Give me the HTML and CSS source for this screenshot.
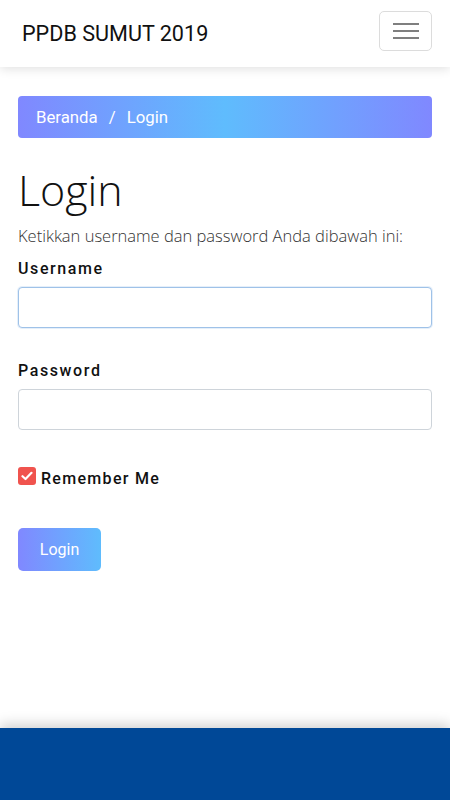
FILE: index.html
```html
<!DOCTYPE html>
<html lang="id">
<head>
<meta charset="utf-8">
<title>Login - PPDB SUMUT 2019</title>
<link rel="stylesheet" href="styles.css">
</head>
<body>
<header class="navbar">
  <span class="brand">PPDB SUMUT 2019</span>
  <button class="toggler" type="button" aria-label="Menu">
    <span class="bar"></span><span class="bar"></span><span class="bar"></span>
  </button>
</header>
<main class="content">
  <nav class="breadcrumb">
    <span>Beranda</span><span class="sep">/</span><span>Login</span>
  </nav>
  <h1 class="title">Login</h1>
  <p class="lead">Ketikkan username dan password Anda dibawah ini:</p>
  <form class="form">
    <div class="group">
      <label class="label">Username</label>
      <input class="input focus" type="text">
    </div>
    <div class="group">
      <label class="label">Password</label>
      <input class="input" type="password">
    </div>
    <div class="check">
      <span class="box"><svg width="12" height="10" viewBox="0 0 12 10"><path d="M1.5 5.2 L4.5 8 L10.5 1.8" fill="none" stroke="#fff" stroke-width="2.2" stroke-linecap="round" stroke-linejoin="round"/></svg></span>
      <span class="check-label">Remember Me</span>
    </div>
    <button class="btn" type="button">Login</button>
  </form>
</main>
<footer class="footer"></footer>
</body>
</html>
```
FILE: styles.css
```css
* { box-sizing: border-box; }
html, body { margin: 0; padding: 0; }
body {
  width: 450px;
  height: 800px;
  display: flex;
  flex-direction: column;
  font-family: Roboto, "Liberation Sans", sans-serif;
  background: #fff;
  color: #212529;
  overflow: hidden;
}
.navbar {
  height: 67px;
  flex: none;
  display: flex;
  align-items: center;
  justify-content: space-between;
  padding: 0 18px 0 22px;
  background: #fff;
  box-shadow: 0 2px 10px rgba(0,0,0,0.12);
  position: relative;
  z-index: 2;
}
.brand {
  font-size: 21.6px;
  color: #111;
}
.toggler {
  width: 53px;
  height: 40px;
  margin-top: -6px;
  border: 1px solid #dcdcdc;
  border-radius: 5px;
  background: #fff;
  display: flex;
  flex-direction: column;
  align-items: center;
  justify-content: center;
  gap: 5px;
  padding: 0;
}
.bar {
  display: block;
  width: 26px;
  height: 2px;
  background: #7f7f7f;
}
.content {
  flex: 1;
  padding: 29px 18px 0 18px;
}
.breadcrumb {
  height: 42px;
  border-radius: 4px;
  background: linear-gradient(90deg, #8088ff 0%, #5fbcfd 50%, #8088ff 100%);
  display: flex;
  align-items: center;
  padding: 0 18px;
  color: #fff;
  font-size: 16.8px;
}
.sep { margin: 0 11px; }
.title {
  font-family: "Open Sans", sans-serif;
  font-weight: 300;
  font-size: 43px;
  line-height: 1.2;
  margin: 26px 0 0 0;
  color: #111;
}
.lead {
  font-family: "Open Sans", sans-serif;
  font-weight: 300;
  font-size: 16.5px;
  margin: 8px 0 0 0;
  line-height: 24px;
  color: #333;
}
.form { margin-top: 10px; }
.group { margin-bottom: 32px; }
.group + .group { margin-bottom: 39px; }
.label {
  display: block;
  font-weight: 500;
  font-size: 16px;
  letter-spacing: 1.6px;
  color: #111;
  line-height: 22px;
  margin-bottom: 7px;
}
.input {
  display: block;
  width: 100%;
  height: 41px;
  border: 1px solid #ced4da;
  border-radius: 4px;
  font-size: 16px;
  padding: 6px 12px;
  background: #fff;
}
.input.focus {
  border-color: #9fc2e8;
  box-shadow: 0 0 0 1px rgba(150,190,235,0.25);
}
.check {
  display: flex;
  align-items: center;
  gap: 5px;
}
.box {
  width: 18px;
  height: 18px;
  border-radius: 3px;
  background: #f0534e;
  display: flex;
  align-items: center;
  justify-content: center;
  margin-top: -4px;
}
.check-label {
  font-weight: 500;
  font-size: 16px;
  letter-spacing: 1.3px;
  color: #111;
}
.btn {
  margin-top: 40px;
  width: 83px;
  height: 43px;
  border: none;
  border-radius: 5px;
  background: linear-gradient(90deg, #8088ff 0%, #5fbcfd 100%);
  color: #fff;
  font-family: Roboto, sans-serif;
  font-size: 16px;
  padding: 0;
}
.footer {
  height: 72px;
  flex: none;
  background: #004897;
  box-shadow: 0 -4px 12px rgba(0,0,0,0.18);
}
```
